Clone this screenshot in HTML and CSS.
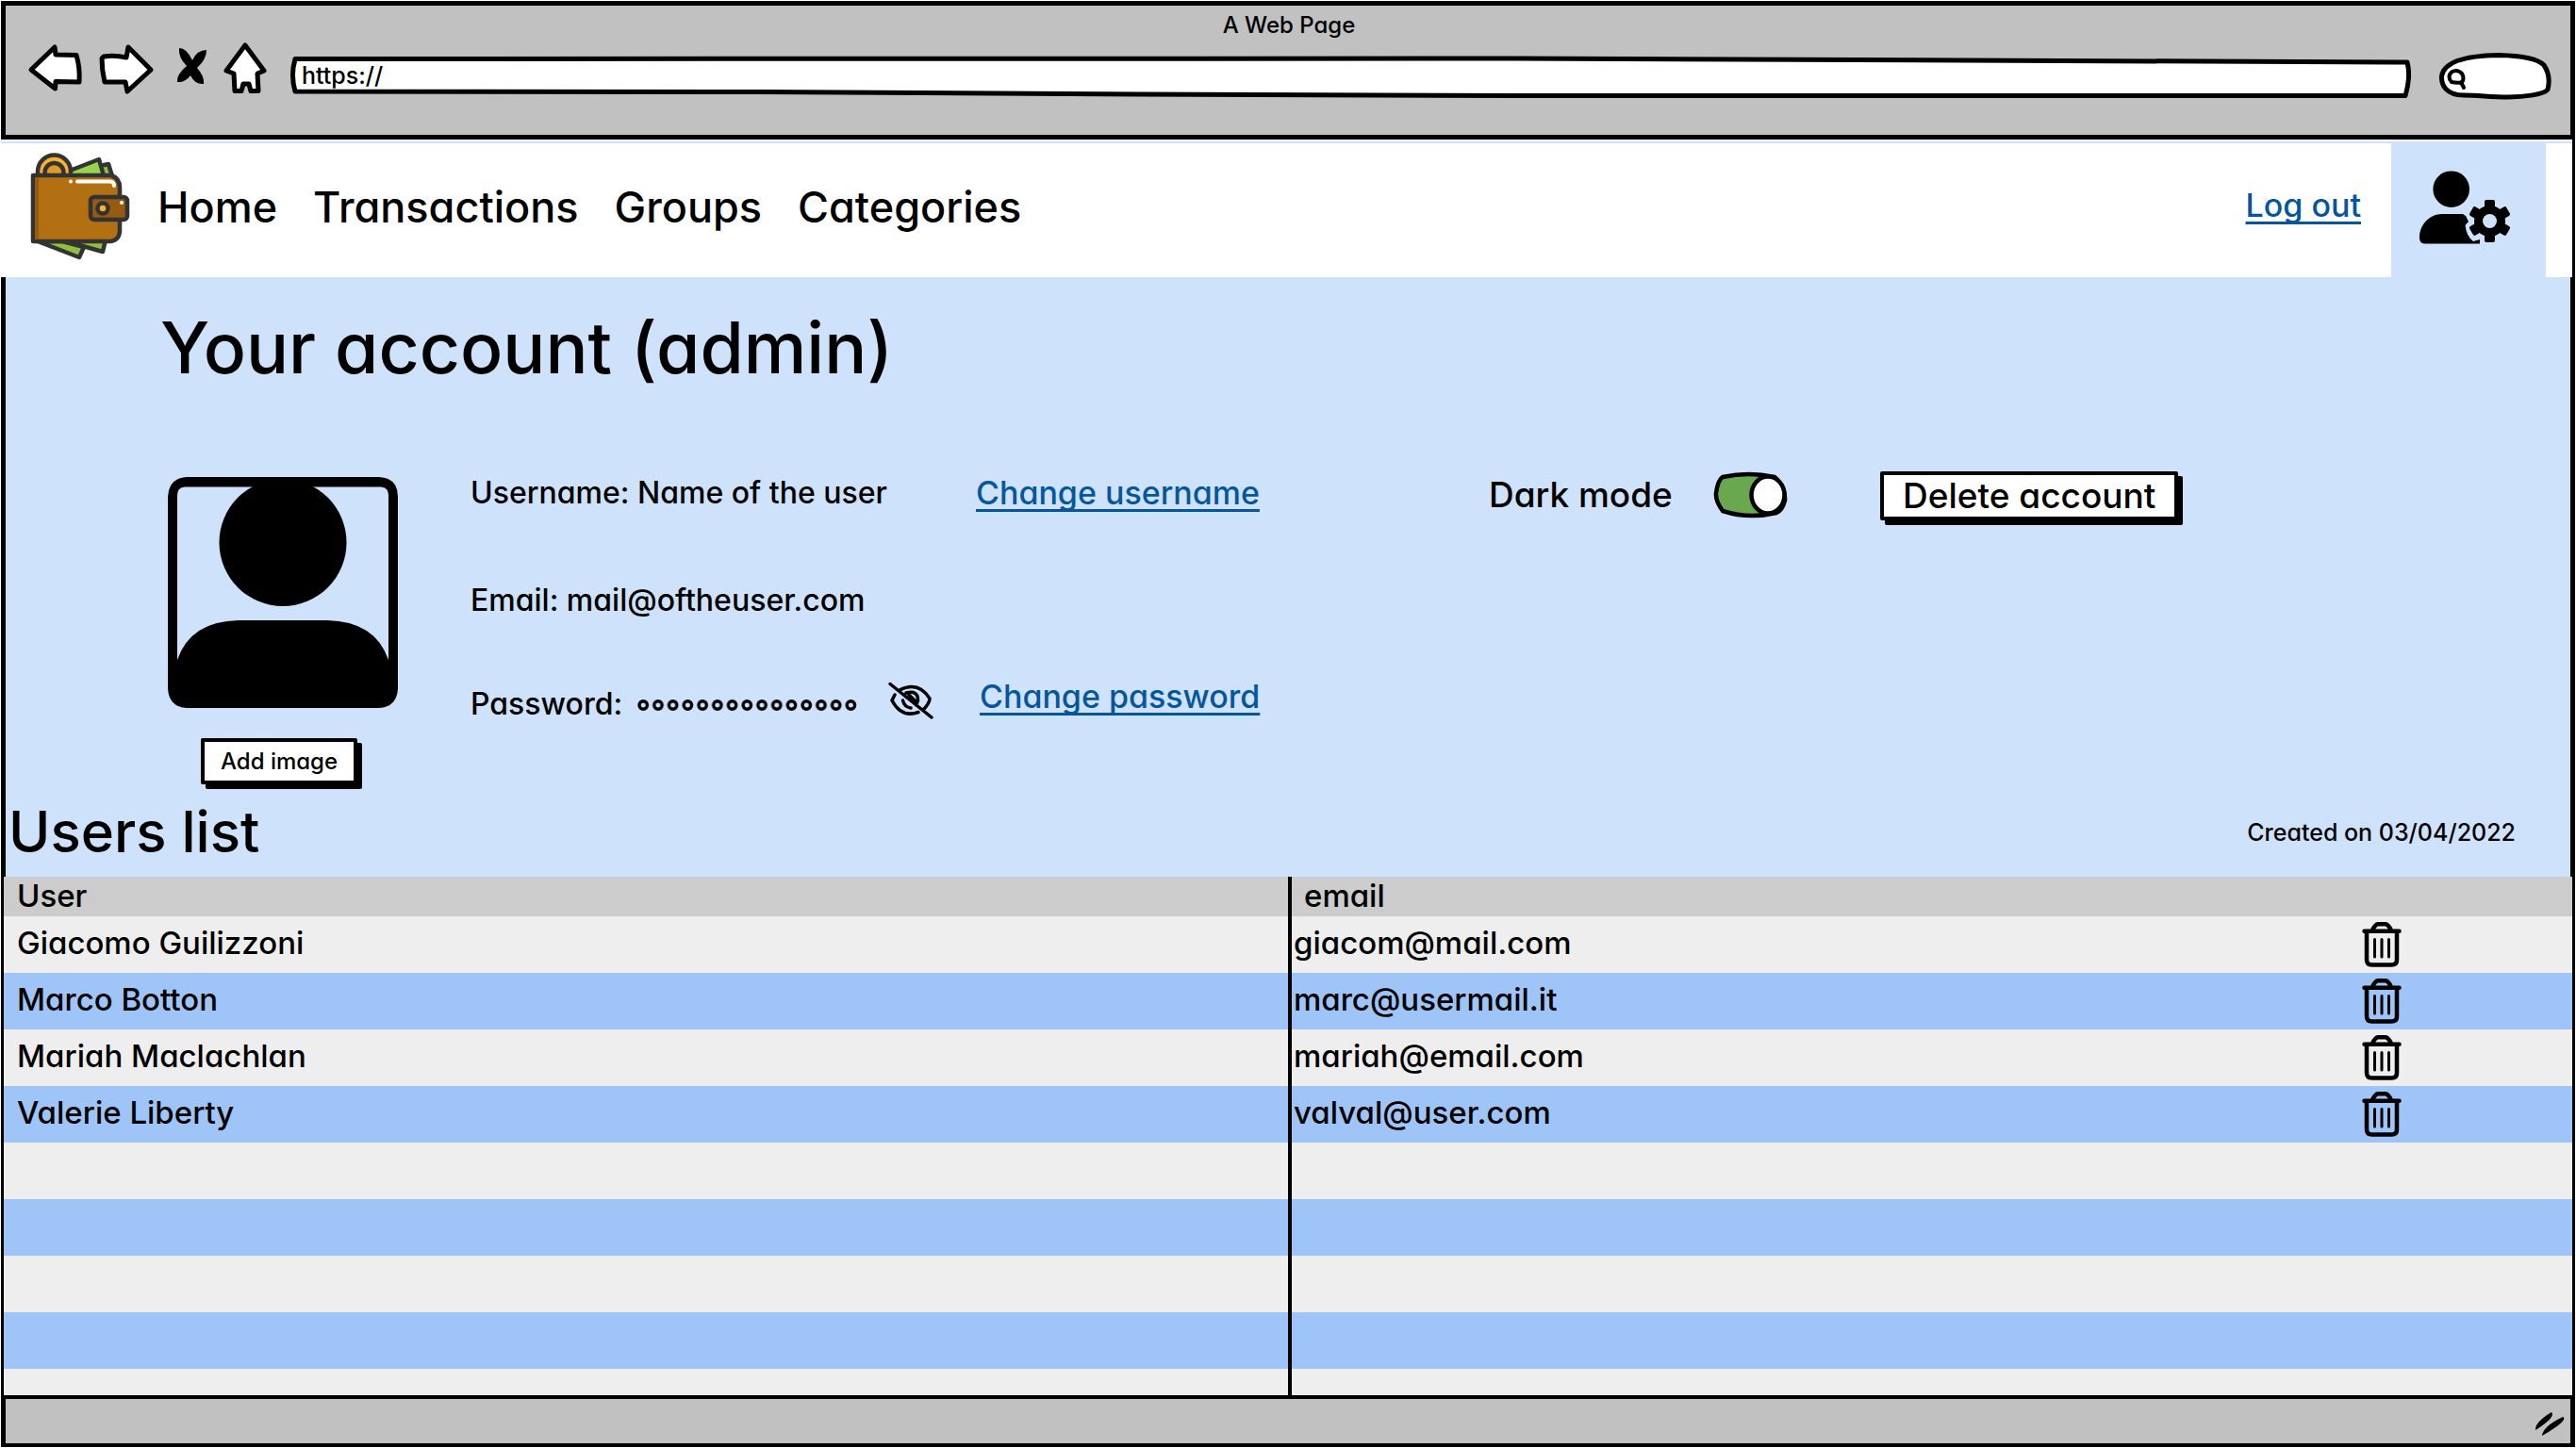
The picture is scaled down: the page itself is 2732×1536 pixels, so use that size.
FILE: index.html
```html
<!DOCTYPE html>
<html lang="en">
<head>
<meta charset="utf-8">
<title>Your account</title>
<meta name="viewport" content="width=device-width, initial-scale=1">
<link rel="stylesheet" href="styles.css">
</head>
<body>
<div class="window">
  <header class="chrome">
    <div class="chrome-title">A Web Page</div>
    <div class="chrome-controls">
      <button class="chrome-button wide" type="button" aria-label="Back">
        <svg viewBox="28 44 68 64"><path d="M33 75 L58 51 L59 59 L81 59.500 Q85 73 84 88 L59 87.500 L58.500 95 Z"/></svg>
      </button>
      <button class="chrome-button wide" type="button" aria-label="Forward">
        <svg viewBox="104 44 68 64"><path d="M110 61 Q121 59 134 62 L136 51 L160 75 L135 98 L133 88 L111 88 Q108 75 108 63 Z"/></svg>
      </button>
      <button class="chrome-button" type="button" aria-label="Stop">
        <svg viewBox="180 44 48 64"><path class="solid" d="M190 52 Q198 52 204 65 Q209 54 219 54 Q219 64 209 73 Q217 82 216 90 Q207 91 202 81 Q196 89 188 88 Q187 80 198 71 Q189 62 190 52 Z"/></svg>
      </button>
      <button class="chrome-button" type="button" aria-label="Home page">
        <svg viewBox="236 44 48 64"><path d="M260 49 L280 76 L273 79 L274 97.500 H266 L264 90 H258 L256 97.500 H249 L248 79 L240 76 Z"/></svg>
      </button>
      <div class="address">
        <svg class="outline" viewBox="0 0 2250 64" preserveAspectRatio="none" aria-hidden="true"><path d="M5 19.500 L1300 19 L2246 23 Q2250 38 2244 58.500 L1300 58.500 L900 57 L500 54.500 L5 54 Q0 37 5 19.500 Z"/></svg>
        <input class="address-input" type="text" aria-label="Address" value="https://">
      </div>
      <div class="search">
        <svg class="outline" viewBox="2587 44 119 64" aria-hidden="true"><path d="M2613 102 C2594 102 2589 91 2589.500 82 C2592 65 2618 60 2650 59.500 C2670 60 2690 62 2698 70 C2704 79 2704 88 2702 96 C2698 101 2678 104 2660 104 C2640 104 2630 102 2613 102 Z"/><path class="lens" d="M2600 88 Q2595 82 2600 77.500 Q2606 74 2611 79 Q2614 84 2611 88.500 Q2605 89 2600 88 Z M2610 88 L2613 94"/></svg>
        <input class="search-input" type="search" aria-label="Search">
      </div>
    </div>
  </header>

  <nav class="nav">
    <a class="logo" href="#" aria-label="Wallet">
      <svg viewBox="32 160 108 120" width="108" height="120">
        <g stroke="#333" stroke-width="4.500" stroke-linejoin="round">
          <path fill="#8fbf3f" d="M70 256 L109 267 L113 250 Z"/>
          <path fill="#8fbf3f" d="M40 256 L84 273 L89 262 L66 256 Z"/>
          <path fill="#8fbf3f" d="M106 176 L115 174 L120 190 H100 Z"/>
          <path fill="#99d24b" d="M74 181 L105 169 L111 190 H74 Z"/>
          <circle cx="57.500" cy="182" r="17.500" fill="#f8b133"/>
          <circle cx="57.500" cy="183" r="10" fill="#e09a2b"/>
          <path fill="#b37012" d="M35 186 H118 Q127 189 127 199 V246 Q126 255 117 256 H35 Z"/>
        </g>
        <path fill="#965a10" d="M37 188.500 H41 V253.500 H37 Z"/>
        <path fill="none" stroke="#fff" stroke-width="4" stroke-linecap="round" d="M82 192.500 H117 Q121 193 121 197 M75 192.500 V192.600"/>
        <rect x="96" y="209" width="39" height="24" rx="4" fill="#965a10" stroke="#333" stroke-width="4.500"/>
        <circle cx="109" cy="221" r="5.500" fill="#f8b133" stroke="#333" stroke-width="4.500"/>
        <circle cx="129" cy="215" r="2" fill="#fff"/>
      </svg>
    </a>
    <div class="nav-links">
      <a href="#">Home</a>
      <a href="#">Transactions</a>
      <a href="#">Groups</a>
      <a href="#">Categories</a>
    </div>
    <a class="link logout" href="#">Log out</a>
    <a class="profile" href="#" aria-label="Account settings">
      <svg viewBox="2564 180 100 80" width="100" height="80">
        <circle cx="2599.700" cy="200.700" r="19.300"/>
        <path d="M2571 258.500 Q2566 258 2566 252 C2566 238 2577 227 2590 227 H2612 L2615 229 L2618 235 L2614.500 239 Q2616 251 2623 256 L2630 254 V258.500 Z"/>
        <g transform="translate(2640.500 234.500)">
          <rect x="-5.500" y="-22.500" width="11" height="45" rx="2"/>
          <rect x="-5.500" y="-22.500" width="11" height="45" rx="2" transform="rotate(60)"/>
          <rect x="-5.500" y="-22.500" width="11" height="45" rx="2" transform="rotate(120)"/>
          <circle r="16.500"/>
          <circle r="7.500" fill="#cfe2fb"/>
        </g>
      </svg>
    </a>
  </nav>

  <main class="main">
    <h1 class="title">Your account (admin)</h1>
    <section class="account">
      <div class="picture">
        <svg class="avatar" viewBox="178 506 244 245" role="img" aria-label="Profile picture">
          <path fill-rule="evenodd" d="M198 506 H402 Q422 507 422 527 V730 Q421 750 402 751 H198 Q179 750 178 730 V527 Q179 507 198 506 Z M196 516.500 Q188 517 188 525 V700 Q202 659 253 658 H347 Q398 659 412 700 V525 Q412 517 404 516.500 Z"/>
          <circle cx="300" cy="575.500" r="67.500"/>
        </svg>
        <button class="button small" type="button">Add image</button>
      </div>
      <div class="details">
        <div class="row">
          <span class="value">Username: Name of the user</span>
          <a class="link" href="#">Change username</a>
        </div>
        <div class="row">
          <span class="value">Email: mail@oftheuser.com</span>
        </div>
        <div class="row password">
          <div class="value secret">
            <span class="secret-label">Password:</span>
            <svg class="dots" viewBox="0 0 236 44" role="img" aria-label="Hidden password">
              <defs><pattern id="dot" width="15.730" height="44" patternUnits="userSpaceOnUse"><circle cx="6.200" cy="23" r="4.200" fill="none" stroke="#000" stroke-width="3.400"/></pattern></defs>
              <rect width="236" height="44" fill="url(#dot)"/>
            </svg>
            <button class="eye" type="button" aria-label="Show password">
              <svg viewBox="942 722 48 40" width="48" height="40"><path d="M944 724.500 L988 760 M954 731 Q974 721 986 740 Q986 745 979 752 M949 736 L946 742 Q956 761 974 754.500 M961 734 Q974 731 973.500 742 L971.500 747 M957.500 742 Q959 749 966 750 M964 736 L972 744"/></svg>
            </button>
          </div>
          <a class="link" href="#">Change password</a>
        </div>
      </div>
      <div class="settings">
        <label class="switch">
          <span>Dark mode</span>
          <span class="switch-box">
            <input type="checkbox" checked>
            <svg viewBox="1816 499 80 50" aria-hidden="true"><path fill="#6aa84f" d="M1827 505 Q1855 499 1882 505 Q1894 516 1893 530 Q1890 541 1884 543 Q1855 550 1827 541 Q1819 530 1820 522 Q1822 508 1827 505 Z"/><ellipse fill="#fff" cx="1875" cy="524" rx="17.500" ry="19.500"/></svg>
          </span>
        </label>
        <button class="button" type="button">Delete account</button>
      </div>
    </section>
    <div class="list-head">
      <h2 class="subtitle">Users list</h2>
      <p class="created">Created on 03/04/2022</p>
    </div>
  </main>

  <div class="table-area">
    <table class="users">
      <colgroup><col class="col-user"><col><col class="col-action"></colgroup>
      <thead>
        <tr><th scope="col">User</th><th scope="col" colspan="2">email</th></tr>
      </thead>
      <tbody>
        <tr><td>Giacomo Guilizzoni</td><td>giacom@mail.com</td><td><button class="trash" type="button" aria-label="Delete Giacomo Guilizzoni"><svg viewBox="0 0 42 48"><use href="#bin"/></svg></button></td></tr>
        <tr><td>Marco Botton</td><td>marc@usermail.it</td><td><button class="trash" type="button" aria-label="Delete Marco Botton"><svg viewBox="0 0 42 48"><use href="#bin"/></svg></button></td></tr>
        <tr><td>Mariah Maclachlan</td><td>mariah@email.com</td><td><button class="trash" type="button" aria-label="Delete Mariah Maclachlan"><svg viewBox="0 0 42 48"><use href="#bin"/></svg></button></td></tr>
        <tr><td>Valerie Liberty</td><td>valval@user.com</td><td><button class="trash" type="button" aria-label="Delete Valerie Liberty"><svg viewBox="0 0 42 48"><use href="#bin"/></svg></button></td></tr>
        <tr><td></td><td></td><td></td></tr>
        <tr><td></td><td></td><td></td></tr>
        <tr><td></td><td></td><td></td></tr>
        <tr><td></td><td></td><td></td></tr>
        <tr><td></td><td></td><td></td></tr>
      </tbody>
    </table>
  </div>

  <footer class="status">
    <svg class="grip" viewBox="2686 1496 38 30" width="38" height="30" aria-hidden="true"><path d="M2689 1517 Q2688 1509 2706 1498 Q2711 1503 2689 1517 Z M2696 1523 Q2697 1513 2718 1503 Q2725 1506 2696 1523 Z"/></svg>
  </footer>
</div>

<svg class="sprite" aria-hidden="true">
  <symbol id="bin" viewBox="0 0 42 48">
    <g fill="none" stroke="#000" stroke-linecap="round" stroke-linejoin="round">
      <path stroke-width="4.500" d="M2.500 9.700 H39.500 M11 9 Q14 2.500 17 2.300 H25 Q28 2.500 31 9 M5 11 V40 Q5 45.500 10.500 45.500 H31.500 Q37 45.500 37 40 V11"/>
      <path stroke-width="3" d="M13.500 18.500 V37 M21 18.500 V37 M28.500 18.500 V37"/>
    </g>
  </symbol>
</svg>
</body>
</html>
```

FILE: styles.css
```css
* {
  box-sizing: border-box;
}

body {
  margin: 0;
  background: #fff;
  color: #000;
  font-family: Inter, "Liberation Sans", sans-serif;
  font-feature-settings: "cv11";
  font-weight: 500;
}

button,
input {
  font: inherit;
  font-feature-settings: inherit;
  color: inherit;
}

button {
  padding: 0;
  border: 0;
  background: none;
}

svg {
  display: block;
}

.sprite {
  position: absolute;
  width: 0;
  height: 0;
}

/* Browser window */

.window {
  display: flex;
  flex-direction: column;
  height: 100vh;
  border: 1px solid #fff;
  background: #000;
  padding: 5px 5px 0;
}

.chrome {
  flex: none;
  height: 142px;
  padding: 5px 20px 0 22px;
  background: #c1c1c1;
  border-bottom: 5px solid #000;
}

.chrome-title {
  font-size: 24px;
  line-height: 32px;
  text-align: center;
}

.chrome-controls {
  display: flex;
  gap: 8px;
}

.chrome-button {
  width: 48px;
  height: 64px;
}

.chrome-button.wide {
  width: 68px;
}

.chrome-button svg,
.outline {
  width: 100%;
  height: 100%;
  fill: #fff;
  stroke: #000;
  stroke-width: 5px;
  stroke-linejoin: round;
  stroke-linecap: round;
}

.chrome-button .solid {
  fill: #000;
  stroke: none;
}

.lens {
  stroke-width: 4px;
}

.address,
.search {
  position: relative;
  height: 64px;
}

.address {
  flex: 1;
  margin: 0 22px 0 16px;
}

.search {
  width: 119px;
}

.outline {
  position: absolute;
  inset: 0;
}

.address-input,
.search-input {
  position: relative;
  display: block;
  width: 100%;
  height: 64px;
  padding: 10px 12px 0;
  border: 0;
  outline: 0;
  background: transparent;
  font-size: 25px;
  appearance: none;
}

.search-input {
  padding-left: 34px;
}

/* Site navigation */

.nav {
  flex: none;
  display: flex;
  align-items: center;
  height: 146px;
  margin: 0 -2px 0 -5px;
  padding-right: 28px;
  border-top: 2px solid #fff;
  background: linear-gradient(#cfe2fb 2px, #fff 2px);
}

.logo {
  margin: 0 0 4px 31px;
}

.nav-links {
  display: flex;
  gap: 38px;
  margin: 0 0 4px 27px;
  font-size: 45px;
  line-height: 56px;
}

.nav-links a {
  color: #000;
  text-decoration: none;
}

.link {
  color: #05569c;
  font-size: 34px;
  line-height: 44px;
  text-decoration: underline;
  text-decoration-thickness: 3px;
  text-underline-offset: 5px;
  text-decoration-skip-ink: none;
}

.logout {
  margin: 0 32px 8px auto;
}

.profile {
  display: grid;
  align-items: center;
  width: 164px;
  height: 144px;
  padding: 0 0 4px 28px;
  background: #cfe2fb;
}

/* Account */

.main {
  flex: none;
  background: #cfe2fb;
}

.title {
  margin: 0;
  padding: 27px 0 0 164px;
  font-size: 75px;
  line-height: 96px;
  font-weight: 500;
}

.account {
  display: flex;
  align-items: flex-start;
  margin-top: 83px;
  padding-left: 172px;
}

.picture {
  width: 244px;
  padding-top: 6px;
}

.avatar {
  width: 244px;
  height: 245px;
}

.button {
  height: 52px;
  padding: 0 20px;
  border: 4px solid #000;
  border-radius: 2px;
  background: #fff;
  box-shadow: 5px 5px 0 #000;
  font-size: 37px;
  line-height: 44px;
}

.button.small {
  display: block;
  height: 49px;
  margin: 32px 0 0 35px;
  padding: 0 17px;
  font-size: 24px;
  line-height: 41px;
}

.details {
  display: grid;
  grid-template-rows: 44px 44px 52px;
  gap: 70px;
  width: 1080px;
  margin-left: 77px;
  padding-top: 1px;
  font-size: 32px;
  line-height: 44px;
}

.row {
  display: flex;
}

.row.password {
  height: 52px;
  margin-top: -12px;
}

.value {
  width: 536px;
}

.secret {
  display: flex;
  align-items: flex-end;
  width: 540px;
}

.secret-label {
  width: 177px;
}

.dots {
  width: 236px;
  height: 44px;
}

.eye {
  align-self: center;
  margin-left: 30px;
}

.eye svg {
  fill: none;
  stroke: #000;
  stroke-width: 3.5px;
  stroke-linecap: round;
}

.settings {
  display: flex;
}

.switch {
  display: flex;
  gap: 42px;
  width: 415px;
  font-size: 37px;
  line-height: 50px;
}

.switch-box {
  position: relative;
  width: 80px;
  height: 50px;
}

.switch-box input {
  position: absolute;
  inset: 0;
  width: 100%;
  height: 100%;
  margin: 0;
  appearance: none;
}

.switch-box svg {
  width: 80px;
  height: 50px;
  stroke: #000;
  stroke-width: 4.5px;
}

.list-head {
  display: flex;
  align-items: center;
  justify-content: space-between;
  margin-top: 10px;
  padding: 0 58px 8px 3px;
}

.subtitle {
  margin: 0;
  font-size: 60px;
  line-height: 80px;
  font-weight: 500;
}

.created {
  margin: 2px 0 0;
  font-size: 25px;
  line-height: 32px;
}

/* Users table */

.table-area {
  flex: 1;
  min-height: 0;
  margin: 0 -2px;
  overflow: hidden;
}

.users {
  width: 100%;
  table-layout: fixed;
  border-collapse: separate;
  border-spacing: 0;
  font-size: 33px;
}

.col-user {
  width: 50%;
}

.col-action {
  width: 404px;
}

.users th {
  height: 42px;
  padding: 0 13px;
  background: #ccc;
  font-weight: 500;
  line-height: 40px;
  text-align: left;
  vertical-align: top;
}

.users td {
  height: 60px;
  padding: 0 2px;
  line-height: 56px;
  vertical-align: top;
}

.users th:first-child,
.users td:first-child {
  padding-left: 14px;
}

.users th:nth-child(2),
.users td:nth-child(2) {
  border-left: 4px solid #000;
}

.users tbody tr {
  background: #eee;
}

.users tbody tr:nth-child(even) {
  background: #9fc5f8;
}

.trash {
  display: block;
  width: 42px;
  height: 48px;
  margin: 6px auto 0;
}

/* Status bar */

.status {
  flex: none;
  display: flex;
  justify-content: flex-end;
  height: 51px;
  margin-top: 4px;
  padding: 12px 2px 0 0;
  border-bottom: 4px solid #000;
  background: #c1c1c1;
}
```
